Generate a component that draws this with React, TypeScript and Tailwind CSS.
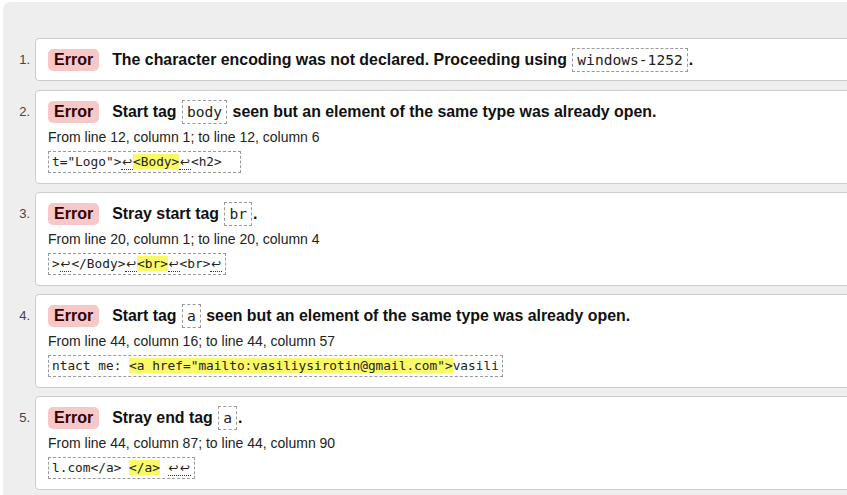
import React from "react";

const sans = { fontFamily: '"Liberation Sans", Arial, sans-serif' };
const mono = { fontFamily: '"DejaVu Sans Mono", "Liberation Mono", monospace' };
const arrowFont = { fontFamily: '"DejaVu Sans", sans-serif' };

function Code({ children }: { children: React.ReactNode }) {
  return (
    <code
      style={mono}
      className="inline-block border border-dashed border-[#9a9a9a] px-[4px] text-[14.6px] font-normal leading-[22px] text-[#222] mx-[1px]"
    >
      {children}
    </code>
  );
}

function Arrow() {
  return (
    <span style={arrowFont} className="inline-block w-[11.7px] text-center text-[12px] leading-[18px]">
      ↩
    </span>
  );
}

function Lf({ count = 1 }: { count?: number }) {
  return (
    <span className="border-b border-dotted border-[#333]">
      {Array.from({ length: count }).map((_, i) => (
        <Arrow key={i} />
      ))}
    </span>
  );
}

function Hl({ children }: { children: React.ReactNode }) {
  return <b className="bg-[#fafa66] font-normal">{children}</b>;
}

function Extract({ children }: { children: React.ReactNode }) {
  return (
    <div className="mt-[4px] flex">
      <code
        style={mono}
        className="block h-[22px] whitespace-pre border border-dashed border-[#9a9a9a] px-[3px] text-[12.8px] leading-[20px] text-[#222]"
      >
        {children}
      </code>
    </div>
  );
}

function Item({
  n,
  title,
  loc,
  extract,
  first,
}: {
  n: number;
  title: React.ReactNode;
  loc?: string;
  extract?: React.ReactNode;
  first?: boolean;
}) {
  return (
    <div className={first ? "mb-[1px] flex" : "flex"}>
      <div className="w-[32px] shrink-0 pr-[5px] pt-[9px] text-right text-[13px] leading-[25px] text-[#444]" style={sans}>
        {n}.
      </div>
      <div
        className={
          "-mr-[20px] flex-1 overflow-hidden rounded-[4px] border border-[#cdcdcd] bg-white pl-[12px] pt-[8px] " +
          (extract ? "h-[94px]" : "h-[43px]")
        }
        style={sans}
      >
        <div className="flex h-[25px] items-center">
          <span className="mr-[13px] rounded-[5px] bg-[#f8c8c8] px-[6px] text-[16px] font-bold leading-[22px] text-[#300]">
            Error
          </span>
          <span className="text-[15.9px] font-bold text-[#111] whitespace-nowrap">{title}</span>
        </div>
        {loc && (
          <div className="mt-[3px] text-[14px] leading-[20px] text-[#222]">{loc}</div>
        )}
        {extract}
      </div>
    </div>
  );
}

export default function App() {
  return (
    <div className="h-[495px] w-[847px] overflow-hidden bg-white" style={sans}>
      <div className="ml-[3px] mt-[2px] h-[600px] rounded-tl-[8px] bg-[#eeeeee] pt-[36px]">
        <div className="flex flex-col gap-[8px]">
          <Item
            n={1}
            first
            title={
              <>
                The character encoding was not declared. Proceeding using <Code>windows-1252</Code>.
              </>
            }
          />
          <Item
            n={2}
            title={
              <>
                Start tag <Code>body</Code> seen but an element of the same type was already open.
              </>
            }
            loc="From line 12, column 1; to line 12, column 6"
            extract={
              <Extract>
                t="Logo"&gt;<Lf />
                <Hl>&lt;Body&gt;</Hl>
                <Lf />&lt;h2&gt;{"  "}
              </Extract>
            }
          />
          <Item
            n={3}
            title={
              <>
                Stray start tag <Code>br</Code>.
              </>
            }
            loc="From line 20, column 1; to line 20, column 4"
            extract={
              <Extract>
                &gt;<Lf />&lt;/Body&gt;<Lf />
                <Hl>&lt;br&gt;</Hl>
                <Lf />&lt;br&gt;<Lf />
              </Extract>
            }
          />
          <Item
            n={4}
            title={
              <>
                Start tag <Code>a</Code> seen but an element of the same type was already open.
              </>
            }
            loc="From line 44, column 16; to line 44, column 57"
            extract={
              <Extract>
                ntact me: <Hl>&lt;a href="mailto:vasiliysirotin@gmail.com"&gt;</Hl>vasili
              </Extract>
            }
          />
          <Item
            n={5}
            title={
              <>
                Stray end tag <Code>a</Code>.
              </>
            }
            loc="From line 44, column 87; to line 44, column 90"
            extract={
              <Extract>
                l.com&lt;/a&gt; <Hl>&lt;/a&gt;</Hl> <Lf count={2} />
              </Extract>
            }
          />
        </div>
      </div>
    </div>
  );
}
